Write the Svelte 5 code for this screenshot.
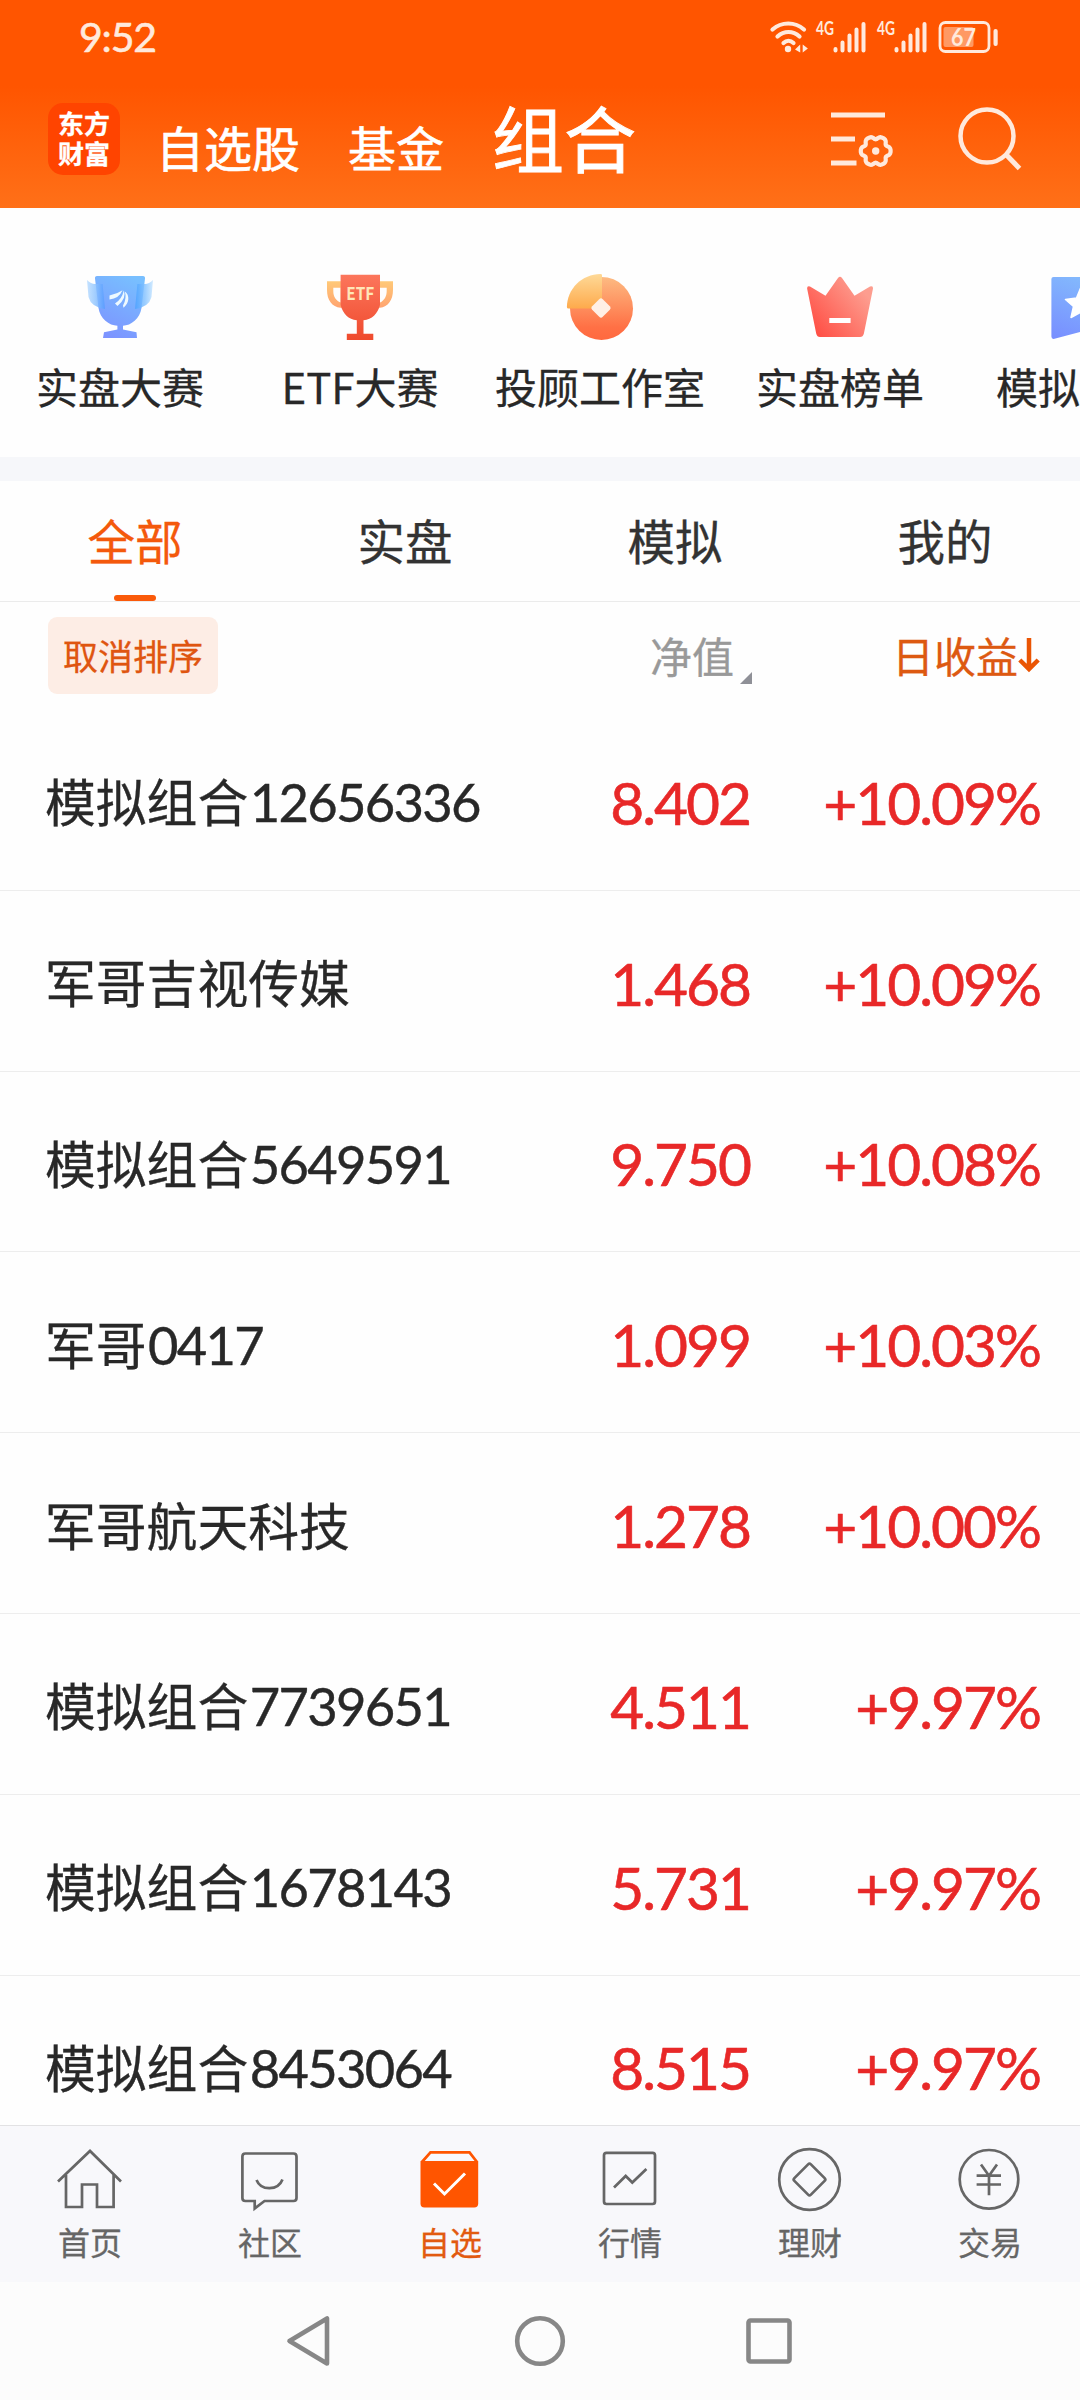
<script>
  const topTabs = ['自选股', '基金', '组合'];
  const filters = ['全部', '实盘', '模拟', '我的'];
  const rows = [
    { name: '模拟组合', id: '12656336', value: '8.402', gain: '+10.09%' },
    { name: '军哥吉视传媒', id: '', value: '1.468', gain: '+10.09%' },
    { name: '模拟组合', id: '5649591', value: '9.750', gain: '+10.08%' },
    { name: '军哥', id: '0417', value: '1.099', gain: '+10.03%' },
    { name: '军哥航天科技', id: '', value: '1.278', gain: '+10.00%' },
    { name: '模拟组合', id: '7739651', value: '4.511', gain: '+9.97%' },
    { name: '模拟组合', id: '1678143', value: '5.731', gain: '+9.97%' },
    { name: '模拟组合', id: '8453064', value: '8.515', gain: '+9.97%' }
  ];

  // Six-lobed cog outline around (cx, cy)
  function cog(cx, cy, radius, depth) {
    const points = [];
    for (let deg = 0; deg < 360; deg += 5) {
      const a = (deg * Math.PI) / 180;
      const r = radius + depth * (Math.cos(6 * a) - 0.25 * Math.cos(12 * a));
      points.push(`${(cx + r * Math.cos(a)).toFixed(2)} ${(cy + r * Math.sin(a)).toFixed(2)}`);
    }
    return `M${points.join('L')}Z`;
  }
</script>

{#snippet signal()}
  <svg class="signal" width="52" height="36" viewBox="0 0 52 36">
    <text x="0" y="17.5" textLength="18" lengthAdjust="spacingAndGlyphs">4G</text>
    <g stroke="#ffe9dc" stroke-width="4" stroke-linecap="round">
      <path d="M19.5 32v1.500M26.500 25.500v8M33.500 18.500v15M40.500 12.500v21M47.500 7v26.500" />
    </g>
  </svg>
{/snippet}

<div class="page">
  <header>
    <div class="status">
      <span class="time">9:52</span>
      <div class="status-icons">
        <svg class="wifi" width="40" height="36" viewBox="0 0 40 36" fill="none" stroke="#ffe9dc" stroke-width="4.2" stroke-linecap="round">
          <path d="M3.5 12.500C12.500 4.500 26 4.500 35 12.500M8.500 19.500C15 13.500 24 13.500 30.500 19.500M14.500 26C17.500 23.200 21.500 23.200 24.500 26" />
          <circle cx="19" cy="32" r="3.200" fill="#ffe9dc" stroke="none" />
          <path d="M31.200 27.500v8l-5.200-3zM33.700 27.500v8l5.200-4z" fill="#ffe9dc" stroke="none" />
        </svg>
        {@render signal()}
        {@render signal()}
        <svg class="battery" width="62" height="36" viewBox="0 0 62 36">
          <rect x="2" y="5.500" width="49" height="29" rx="5.500" fill="none" stroke="#ffe9dc" stroke-width="2.800" />
          <rect x="5.500" y="10" width="30" height="20" rx="2" fill="#ff9964" />
          <rect x="55.500" y="12" width="4.200" height="17" rx="2" fill="#ffe9dc" />
          <text x="13" y="29" textLength="25" lengthAdjust="spacingAndGlyphs">67</text>
        </svg>
      </div>
    </div>
    <div class="titlebar">
      <div class="logo"><span>东方</span><span>财富</span></div>
      <nav class="titles">
        {#each topTabs as t, i}
          <span class:current={i === 2}>{t}</span>
        {/each}
      </nav>
      <div class="actions">
        <svg width="66" height="66" viewBox="0 0 66 66" fill="none" stroke="#ffe9dc">
          <path d="M6 9h54M6 33h24M6 57h25.500" stroke-width="5" />
          <path d={cog(50.7, 45, 13.7, 1.6)} stroke-width="4.200" stroke-linejoin="round" />
          <circle cx="50.700" cy="45" r="3.700" fill="#ffe9dc" stroke="none" />
        </svg>
        <svg width="66" height="66" viewBox="0 0 66 66" fill="none" stroke="#ffe9dc" stroke-width="4.500">
          <circle cx="30" cy="30" r="26.500" />
          <path d="M49 48.500L62.500 62.500" stroke-width="5" />
        </svg>
      </div>
    </div>
  </header>

  <section class="quick">
    <div class="entry">
      <svg width="80" height="80" viewBox="0 0 80 80">
        <defs>
          <linearGradient id="cup" x1=".7" y1="0" x2=".3" y2="1"><stop offset="0" stop-color="#78bfff" /><stop offset="1" stop-color="#7c93ff" /></linearGradient>
          <linearGradient id="earL"><stop offset="0" stop-color="#b9dcff" /><stop offset=".45" stop-color="#8fc4ff" /><stop offset="1" stop-color="#559cff" /></linearGradient>
          <linearGradient id="earR"><stop offset="0" stop-color="#4ba2ff" /><stop offset=".55" stop-color="#84c2ff" /><stop offset="1" stop-color="#c8e6ff" /></linearGradient>
        </defs>
        <path d="M17 9H63Q65.300 9 65 11.500L61.500 41C60 51.500 51 58.700 43 58.700V62.500L56.500 65.300L57 71H23L24 65.300L37.400 62.500V58.700C29 58.700 20 51.500 18.500 41L15 11.500Q14.700 9 17 9Z" fill="url(#cup)" />
        <path d="M7 13Q11 17 15 17H22.600L25 42Q11 40 8.500 30Z" fill="url(#earL)" opacity=".82" />
        <path d="M73 13Q69 17 65 17H57.400L55 42Q69 40 71.500 30Z" fill="url(#earR)" opacity=".82" />
        <path d="M29.500 28.500Q37 27 42.500 23.200Q39 31.500 29.500 32.500ZM35 36.500Q42 32 43.800 23.500Q47 31 37.500 39ZM43 38.500Q47 31 44.800 24.500C50 28 49.500 36 43.500 40.700Z" fill="#eefaff" />
      </svg>
      <span>实盘大赛</span>
    </div>
    <div class="entry">
      <svg width="80" height="80" viewBox="0 0 80 80">
        <defs>
          <linearGradient id="etf" x1="0" y1="0" x2="0" y2="1"><stop offset="0" stop-color="#fc765c" /><stop offset="1" stop-color="#ef4a2d" /></linearGradient>
          <linearGradient id="ears" x1="0" y1="0" x2="0" y2="1"><stop offset="0" stop-color="#ffc978" /><stop offset="1" stop-color="#ffa470" /></linearGradient>
        </defs>
        <path fill-rule="evenodd" d="M7 14.300H73V23C73 33 68 40 60 40.700H20.600C12 40 7 33 7 23ZM13.300 20.700V24C13.300 30 16 33.500 20.600 35.500V20.700ZM60 20.700V35.500C64.500 33.500 66.700 29 66.700 24V20.700Z" fill="url(#ears)" />
        <path d="M20.600 7.700H60V38C57.500 47 52 52.500 43.500 53.200V66.700H53.300V73H26.800V66.700H36.800V53.200C28.500 52.500 23 47 20.600 38Z" fill="url(#etf)" />
        <text class="etf" x="26.300" y="33.400" textLength="28" lengthAdjust="spacingAndGlyphs">ETF</text>
      </svg>
      <span>ETF大赛</span>
    </div>
    <div class="entry">
      <svg width="80" height="80" viewBox="0 0 80 80">
        <defs>
          <linearGradient id="coin" x1="0" y1="0" x2="0" y2="1"><stop offset="0" stop-color="#fdbb82" /><stop offset=".8" stop-color="#ff7045" /><stop offset="1" stop-color="#ff693f" /></linearGradient>
          <linearGradient id="slice" x1="0" y1="0" x2="0" y2="1"><stop offset="0" stop-color="#fed997" /><stop offset="1" stop-color="#feaa4c" /></linearGradient>
        </defs>
        <circle cx="41.500" cy="41.400" r="31.500" fill="url(#coin)" />
        <path d="M42 41.500V8Q42 7 40.500 7C22 7 7 22 6.900 40Q6.900 41.500 8.500 41.500Z" fill="url(#slice)" />
        <rect x="33.500" y="33.500" width="15" height="15" rx="2.500" transform="rotate(45 41 41)" fill="#fff0e6" />
      </svg>
      <span>投顾工作室</span>
    </div>
    <div class="entry">
      <svg width="80" height="80" viewBox="0 0 80 80">
        <defs>
          <linearGradient id="crown" x1=".1" y1=".9" x2=".9" y2=".3"><stop offset="0" stop-color="#ff4f45" /><stop offset="1" stop-color="#fd9d8f" /></linearGradient>
        </defs>
        <path d="M7.100 21.500Q7 18.500 10 19.500L25.500 28.700L38 11Q40 8.400 42 11L54.500 28.700L70 19.500Q73.300 18.500 73 21.500L63.900 66.500Q63 70 60 70H20Q17 70 16.200 66.500Z" fill="url(#crown)" />
        <rect x="29.300" y="51" width="21.300" height="5" fill="#fff" />
      </svg>
      <span>实盘榜单</span>
    </div>
    <div class="entry last">
      <svg width="80" height="80" viewBox="0 0 80 80">
        <defs>
          <linearGradient id="book" x1=".5" y1="0" x2=".15" y2="1"><stop offset="0" stop-color="#83b9fd" /><stop offset="1" stop-color="#788fff" /></linearGradient>
        </defs>
        <path d="M13.500 10H66.500Q68.600 10 68.600 12V69.500Q68.600 72.500 66 71.700L40 65L14.500 71.800Q11.400 72.500 11.400 69.500V12Q11.400 10 13.500 10Z" fill="url(#book)" />
        <path d="M41 20L45.500 31L57 32L48.500 39.500L51 50.500L41 45L31 50.500L33.500 39.500L25.500 32.500L36.500 31Z" fill="#fff" stroke="#fff" stroke-width="1.500" stroke-linejoin="round" />
      </svg>
      <span>模拟</span>
    </div>
  </section>

  <nav class="filters">
    {#each filters as f, i}
      <div class:active={i === 0}><span>{f}</span></div>
    {/each}
  </nav>

  <div class="sorting">
    <div class="left"><button>取消排序</button></div>
    <div class="net">
      <span>净值</span>
      <svg width="12" height="12" viewBox="0 0 12 12"><path d="M12 0V12H0Z" fill="#8f9097" /></svg>
    </div>
    <div class="daily">
      <span>日收益</span>
      <svg width="22" height="36" viewBox="0 0 22 36" fill="none" stroke="#ea5504" stroke-width="4.500"><path d="M11 1V32M1.800 23L11 32L20.200 23" /></svg>
    </div>
  </div>

  <main>
    {#each rows as r}
      <div class="row">
        <span class="name">{r.name}<span class="id">{r.id}</span></span>
        <span class="value">{r.value}</span>
        <span class="gain">{r.gain}</span>
      </div>
    {/each}
  </main>

  <footer>
    <div class="tab">
      <svg viewBox="0 0 80 80"><path d="M8 41.500L40 11L71 41.500M16 35V67H32V44.500H47V67H63.600V35" /></svg>
      <span>首页</span>
    </div>
    <div class="tab">
      <svg viewBox="0 0 80 80"><path d="M15.400 13.500H63.500Q66.500 13.500 66.500 16.500V58Q66.500 61 63.500 61H34.500L24.700 68.500V61H15.400Q12.400 61 12.400 58V16.500Q12.400 13.500 15.400 13.500ZM26.500 40C31 51 48 51 52.500 39.500" /></svg>
      <span>社区</span>
    </div>
    <div class="tab on">
      <svg viewBox="0 0 80 80">
        <path d="M12 22L20.500 12.300H59.500L67 22" stroke="#ff5500" />
        <path d="M10.500 21H68.200V63.500Q68.200 67.500 64.200 67.500H14.500Q10.500 67.500 10.500 63.500Z" fill="#ff5500" stroke="none" />
        <path d="M24 43.500L34.500 54L55 33.500" stroke="#fff" stroke-width="3" />
      </svg>
      <span>自选</span>
    </div>
    <div class="tab">
      <svg viewBox="0 0 80 80"><rect x="14" y="12.800" width="51" height="51.200" rx="2.500" /><path d="M24 47.500L35.700 36L42.300 42.500L56.400 29" /></svg>
      <span>行情</span>
    </div>
    <div class="tab">
      <svg viewBox="0 0 80 80"><circle cx="39.500" cy="39.500" r="30.300" /><rect x="27.800" y="27.800" width="23.400" height="23.400" rx="2" transform="rotate(45 39.500 39.500)" /></svg>
      <span>理财</span>
    </div>
    <div class="tab">
      <svg viewBox="0 0 80 80"><circle cx="39" cy="39.300" r="29.300" /><path d="M31 24.500L39 35.700L47 24.500M26.600 35.700H51M26.600 44.500H51M39 35.700V55.300" /></svg>
      <span>交易</span>
    </div>
  </footer>

  <div class="sysnav">
    <svg width="52" height="52" viewBox="0 0 52 52"><path d="M42 3.500V48.500L4.500 26Z" stroke-linejoin="round" /></svg>
    <svg width="52" height="52" viewBox="0 0 52 52"><circle cx="26" cy="26" r="22.800" /></svg>
    <svg width="52" height="52" viewBox="0 0 52 52"><rect x="5.500" y="5.500" width="41" height="41" rx="2" /></svg>
  </div>
</div>

<style>
  :global(body) {
    margin: 0;
    background: #fff;
  }
  .page {
    width: 1080px;
    height: 2400px;
    display: flex;
    flex-direction: column;
    overflow: hidden;
    background: #fefefe;
    color: #282828;
    font-family: 'Noto Sans CJK SC', 'Noto Sans', sans-serif;
    -webkit-text-stroke: 0.3px currentColor;
  }
  svg {
    display: block;
    flex: none;
    overflow: visible;
  }
  header {
    flex: none;
    height: 208px;
    color: #fff;
    background: linear-gradient(#ff5500 0, #ff5500 86px, #ff7018 208px);
  }
  .status {
    display: flex;
    justify-content: space-between;
    height: 72px;
    padding: 0 80px 0 79px;
    color: #ffe9dc;
  }
  .time {
    font-family: Lato, sans-serif;
    font-size: 41px;
    line-height: 73px;
    letter-spacing: -1.2px;
    -webkit-text-stroke: 0.6px currentColor;
  }
  .status-icons {
    display: flex;
    align-items: flex-start;
    padding-top: 17px;
  }
  .wifi {
    margin-right: 7px;
  }
  .signal {
    margin-right: 9px;
  }
  .status-icons text {
    fill: #ffe9dc;
    font-family: Lato, sans-serif;
    font-size: 18px;
    font-weight: 700;
  }
  .battery text {
    font-size: 24px;
  }
  .titlebar {
    display: flex;
    align-items: center;
    height: 134px;
    padding: 0 57px 0 48px;
  }
  .logo {
    width: 72px;
    height: 72px;
    border-radius: 15px;
    background: #ff4400;
    display: flex;
    flex-direction: column;
    align-items: center;
    justify-content: center;
    font-size: 26px;
    font-weight: 700;
    line-height: 30px;
    padding-bottom: 3px;
    box-sizing: border-box;
  }
  .titles {
    display: flex;
    align-items: baseline;
    gap: 48px;
    margin: 4px auto 0 36px;
    font-size: 48px;
    line-height: 72px;
    -webkit-text-stroke: 0.6px currentColor;
  }
  .current {
    font-size: 72px;
    -webkit-text-stroke: 0.9px currentColor;
  }
  .actions {
    display: flex;
    gap: 66px;
  }
  .quick {
    flex: none;
    display: flex;
    height: 249px;
    border-bottom: 24px solid #f6f7fa;
  }
  .entry {
    flex: 0 0 240px;
    display: flex;
    flex-direction: column;
    align-items: center;
    padding-top: 59px;
    font-size: 42px;
    line-height: 60px;
    white-space: nowrap;
  }
  .entry span {
    margin-top: 9px;
  }
  .last span {
    width: 168px;
  }
  .etf {
    font-size: 17.5px;
    font-weight: 700;
    fill: #ffe6b8;
    -webkit-text-stroke: 0;
  }
  .filters {
    flex: none;
    display: grid;
    grid-template-columns: repeat(4, 1fr);
    height: 120px;
    border-bottom: 1px solid #ebebeb;
    font-size: 47.5px;
    color: #333;
  }
  .filters div {
    display: flex;
    flex-direction: column;
    align-items: center;
    line-height: 118px;
  }
  .filters span {
    height: 114px;
  }
  .filters .active {
    color: #f4590c;
  }
  .active::after {
    content: '';
    width: 42px;
    height: 6px;
    border-radius: 3px;
    background: #fa5a0a;
  }
  .sorting {
    flex: none;
    display: flex;
    height: 108px;
    font-size: 42px;
    line-height: 60px;
  }
  .left {
    width: 602px;
    padding: 15px 0 0 48px;
    box-sizing: content-box;
  }
  button {
    display: block;
    width: 170px;
    height: 77px;
    padding: 0 0 2px;
    border: 0;
    border-radius: 9px;
    background: #fdede5;
    color: #df5510;
    font-family: inherit;
    font-size: 35px;
    line-height: 73px;
    white-space: nowrap;
  }
  .net {
    display: flex;
    width: 102px;
    padding-top: 23px;
    gap: 6px;
    color: #999;
  }
  .net svg {
    margin-top: 47px;
  }
  .daily {
    display: flex;
    margin-left: 140px;
    padding-top: 23px;
    color: #dd5911;
  }
  .daily svg {
    margin-top: 12px;
  }
  main {
    flex: 1;
    min-height: 0;
    overflow: hidden;
  }
  .row {
    display: grid;
    grid-template-columns: 499px 206px 290px;
    align-items: center;
    height: 180.8px;
    box-sizing: border-box;
    padding: 5px 40px 5px 45px;
    border-bottom: 1px solid #ededed;
    line-height: 80px;
    white-space: nowrap;
  }
  .name {
    padding-top: 1px;
    font-size: 50.8px;
  }
  .id {
    margin-left: 1.5px;
    font-family: Lato, sans-serif;
    font-size: 52.5px;
    line-height: 1;
    letter-spacing: -1.7px;
    -webkit-text-stroke: 0.4px currentColor;
  }
  .value,
  .gain {
    padding-top: 4px;
    font-family: Lato, sans-serif;
    font-size: 58.6px;
    color: #e82828;
    text-align: right;
    letter-spacing: -2px;
    -webkit-text-stroke: 0.6px currentColor;
  }
  footer {
    flex: none;
    display: grid;
    grid-template-columns: repeat(6, 1fr);
    height: 156px;
    border-top: 1px solid #e2e2e4;
    background: #f8f8fb;
    color: #666;
  }
  .tab {
    display: flex;
    flex-direction: column;
    align-items: center;
    padding-top: 14px;
    font-size: 32px;
    line-height: 42px;
  }
  .tab svg {
    width: 80px;
    height: 80px;
    fill: none;
    stroke: #666;
    stroke-width: 2.7;
  }
  .tab.on {
    color: #e25a10;
  }
  .sysnav {
    flex: none;
    height: 118px;
    display: flex;
    justify-content: center;
    align-items: center;
    gap: 177px;
    background: #fcfcfc;
  }
  .sysnav svg {
    fill: none;
    stroke: #878787;
    stroke-width: 4.6;
  }
</style>
